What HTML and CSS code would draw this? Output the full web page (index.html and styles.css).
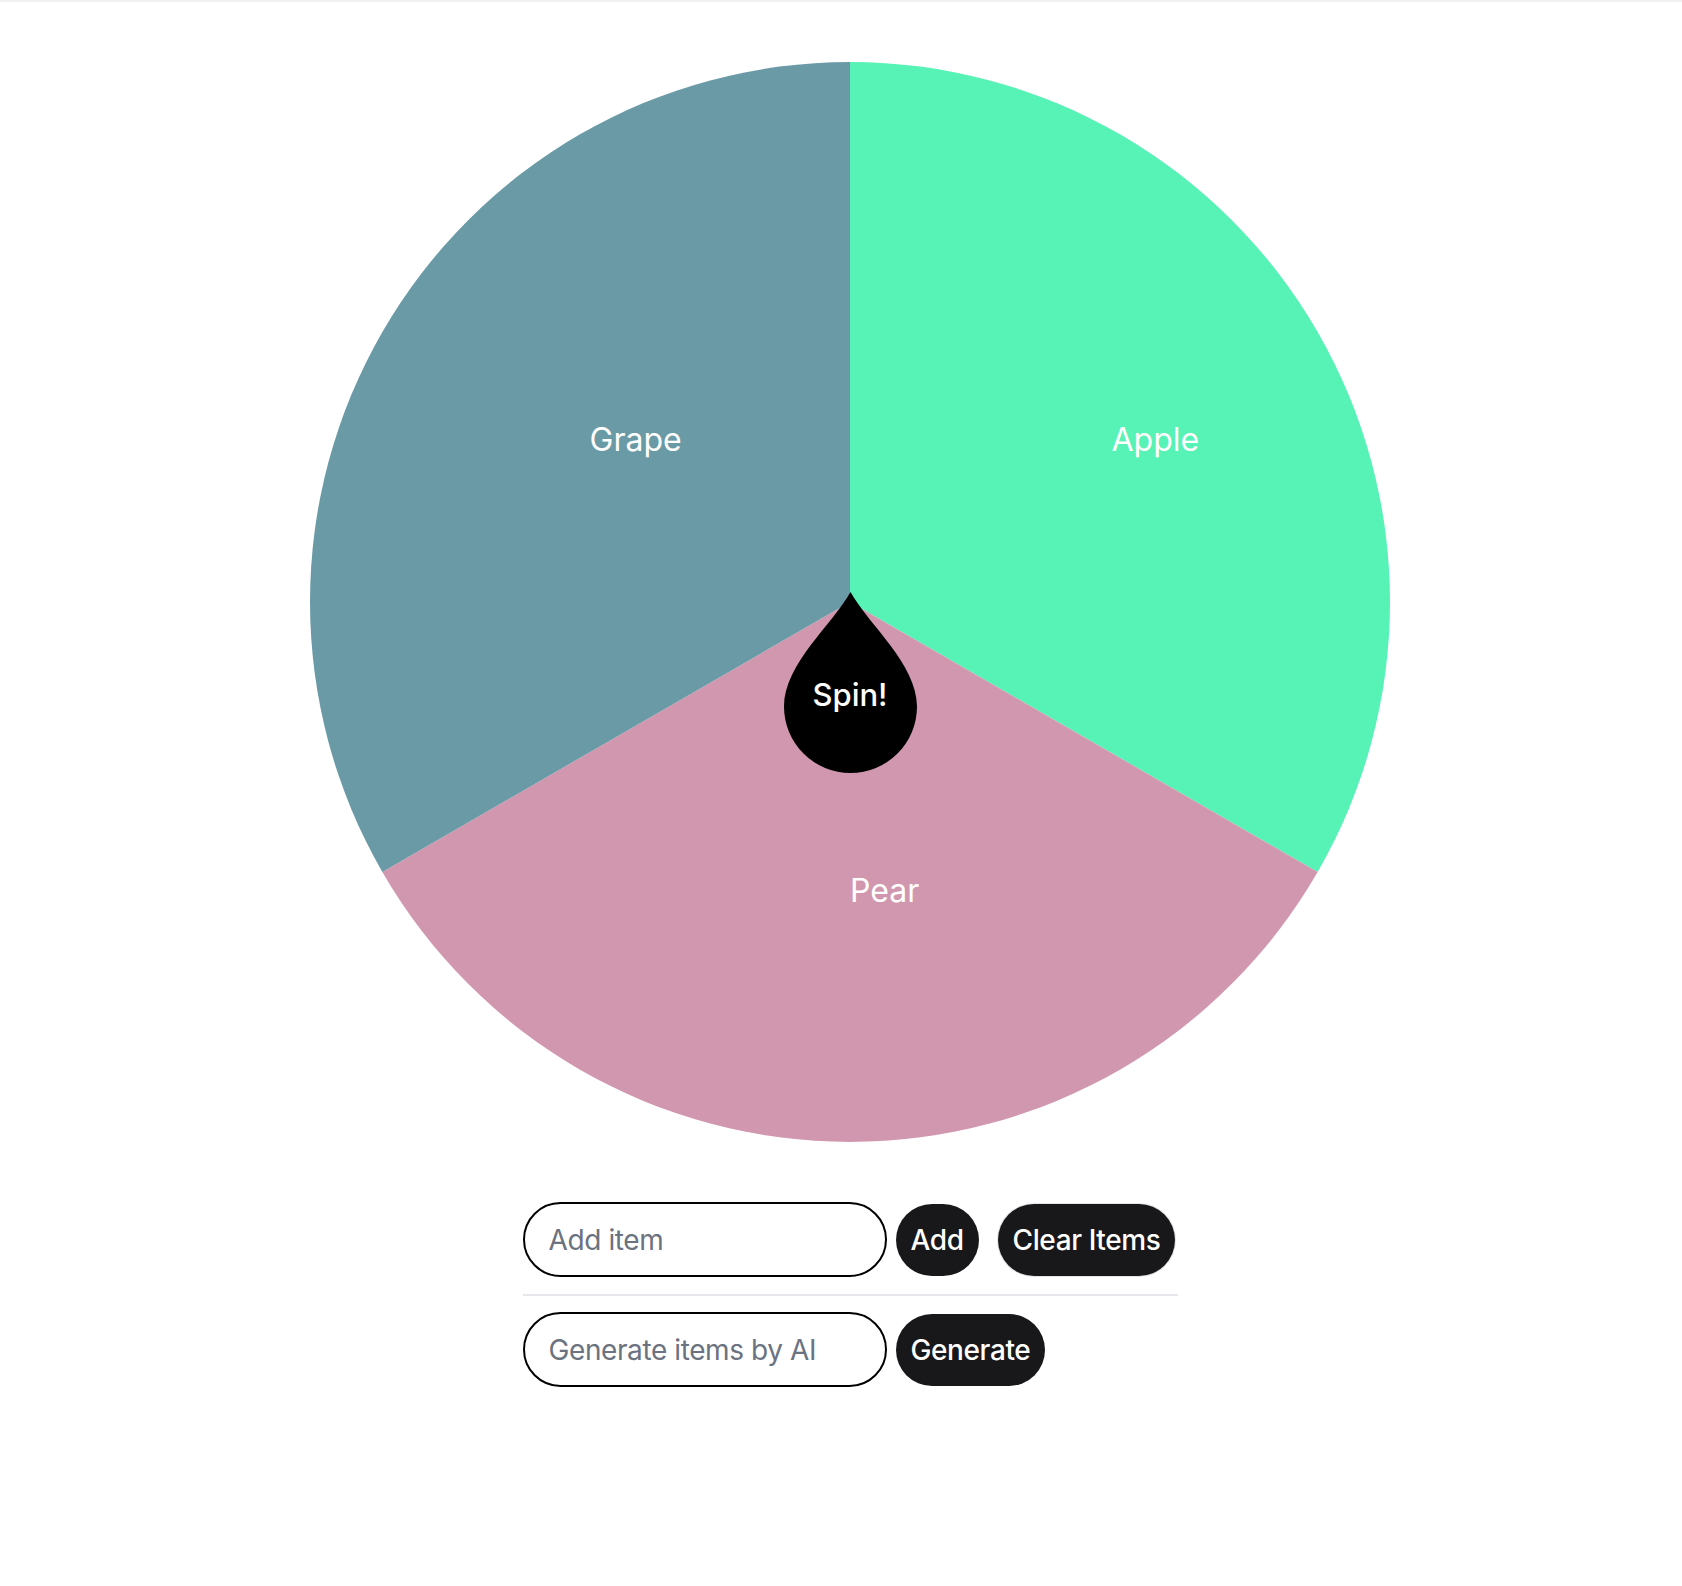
FILE: index.html
```html
<!DOCTYPE html>
<html lang="en">
<head>
<meta charset="utf-8">
<title>Spin the Wheel</title>
<link rel="stylesheet" href="styles.css">
</head>
<body>
<div class="topbar"></div>
<main class="page">
  <div class="wheel-wrap">
    <svg class="wheel" viewBox="0 0 1080 1080" width="1080" height="1080">
      <path class="seg-apple" d="M540 540 L540 0 A540 540 0 0 1 1007.65 810 Z"/>
      <path class="seg-pear" d="M540 540 L1007.65 810 A540 540 0 0 1 72.35 810 Z"/>
      <path class="seg-grape" d="M540 540 L72.35 810 A540 540 0 0 1 540 0 Z"/>
      <text class="seg-label" x="801.5" y="389">Apple</text>
      <text class="seg-label" x="540" y="840">Pear</text>
      <text class="seg-label" x="279.5" y="389">Grape</text>
    </svg>
    <button class="spin" type="button">
      <svg class="spin-shape" viewBox="0 0 133 181" width="133" height="181">
        <path d="M66.5 0 C 84 32 133 72 133 114.5 A66.5 66.5 0 1 1 0 114.5 C 0 72 49 32 66.5 0 Z"/>
      </svg>
      <span class="spin-text">Spin!</span>
    </button>
  </div>

  <section class="controls">
    <div class="row">
      <input class="field" type="text" placeholder="Add item">
      <button class="btn" type="button">Add</button>
      <button class="btn btn-clear" type="button">Clear Items</button>
    </div>
    <hr class="divider">
    <div class="row">
      <input class="field" type="text" placeholder="Generate items by AI">
      <button class="btn" type="button">Generate</button>
    </div>
  </section>
</main>
</body>
</html>
```

FILE: styles.css
```css
* { box-sizing: border-box; }

html, body {
  margin: 0;
  padding: 0;
  background: #ffffff;
  font-family: Inter, "Noto Sans", "Liberation Sans", sans-serif;
}

.topbar {
  height: 2px;
  background: #f1f1f1;
}

.page {
  display: flex;
  flex-direction: column;
  align-items: center;
  padding: 60px 0 0 18px;
}

.wheel-wrap {
  position: relative;
  width: 1080px;
  height: 1080px;
}

.wheel {
  display: block;
}

.seg-apple { fill: #57f2b5; }
.seg-pear { fill: #d197af; }
.seg-grape { fill: #6a9aa6; }

.seg-label {
  fill: #ffffff;
  font-family: Inter, "Noto Sans", sans-serif;
  font-size: 32px;
  font-weight: 400;
}

.spin {
  position: absolute;
  left: 473.5px;
  top: 530px;
  width: 133px;
  height: 181px;
  padding: 0;
  border: 0;
  background: transparent;
  cursor: pointer;
}

.spin-shape {
  position: absolute;
  left: 0;
  top: 0;
  display: block;
}

.spin-shape path { fill: #000000; }

.spin-text {
  position: absolute;
  left: 0;
  right: 0;
  top: 83px;
  text-align: center;
  color: #ffffff;
  font-family: Inter, "Noto Sans", sans-serif;
  font-size: 31px;
  font-weight: 500;
  line-height: 40px;
}

.controls {
  margin-top: 60px;
  width: 655px;
  display: flex;
  flex-direction: column;
}

.row {
  display: flex;
  align-items: center;
  gap: 9px;
}

.field {
  flex: 0 0 364px;
  width: 364px;
  height: 75px;
  border: 2px solid #000000;
  border-radius: 9999px;
  padding: 0 24px;
  font-family: Inter, "Noto Sans", sans-serif;
  font-size: 28px;
  letter-spacing: -0.4px;
  color: #111827;
  background: #ffffff;
  outline: none;
}

.field::placeholder { color: #6b7280; }

.btn {
  flex: 0 0 auto;
  white-space: nowrap;
  height: 72px;
  padding: 0 15px;
  border: 0;
  border-radius: 9999px;
  background: #18181b;
  color: #ffffff;
  font-family: Inter, "Noto Sans", sans-serif;
  font-size: 28px;
  font-weight: 500;
  letter-spacing: -0.4px;
  cursor: pointer;
}

.btn-clear {
  margin-left: 10px;
  box-shadow: 0 0 0 1px #e4e4e7;
}

.divider {
  margin: 17px 0 16px;
  border: 0;
  height: 2px;
  background: #e5e7eb;
}
```
